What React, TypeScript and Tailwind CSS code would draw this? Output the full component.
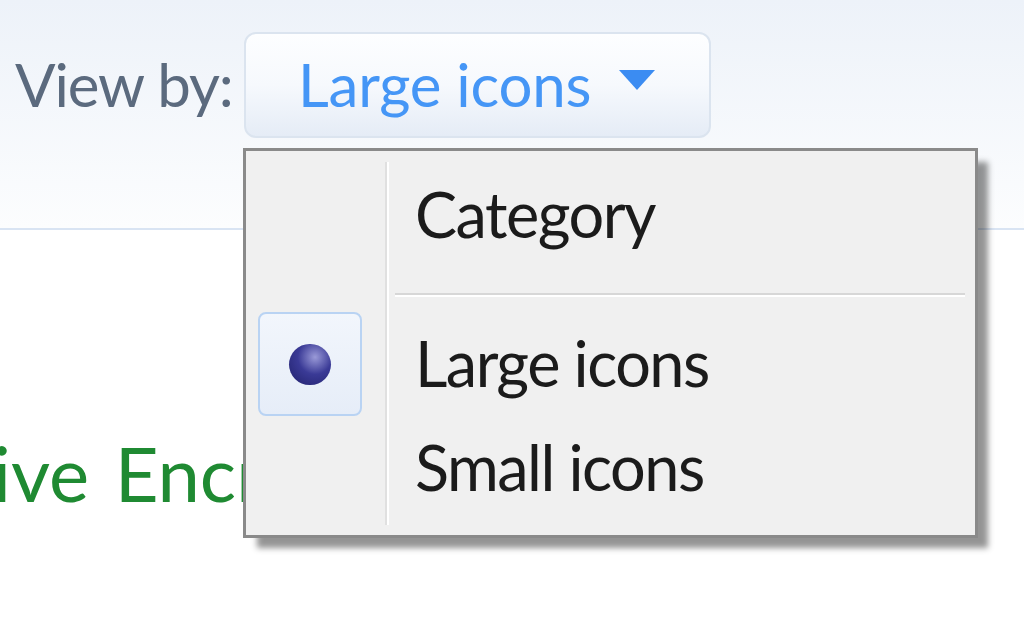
import React from 'react'

const font = { fontFamily: 'Lato, "Noto Sans", sans-serif' }

function RadioBullet() {
  return (
    <div className="w-[104px] h-[104px] rounded-[8px] border-2 border-[#b9d3f3] bg-gradient-to-b from-[#f2f6fc] to-[#e6edf8] flex items-center justify-center">
      <div className="w-[42px] h-[41px] rounded-full bg-[radial-gradient(circle_at_62%_32%,#9a9ad8_0%,#3a3a96_45%,#20206a_100%)]" />
    </div>
  )
}

function MenuRow({ label, checked }: { label: string; checked?: boolean }) {
  return (
    <div className="flex h-[104px] items-center">
      <div className="w-[139px] shrink-0 flex items-center pl-[12px]">{checked && <RadioBullet />}</div>
      <span className="pl-[30px] pb-[4px] text-[63px] leading-none tracking-[-1.5px] text-[#1b1b1b]">{label}</span>
    </div>
  )
}

export default function App() {
  return (
    <div className="w-[1024px] h-[630px] overflow-hidden bg-white" style={font}>
      {/* toolbar strip */}
      <header className="h-[230px] border-b-2 border-[#d9e4f3] bg-gradient-to-b from-[#edf2f9] to-[#fcfdfe] flex items-start pt-[32px] pl-[15px]">
        <div className="w-[229px] h-[106px] flex items-center pb-[2px]">
          <span className="text-[60px] leading-none tracking-[-1.1px] text-[#5b6a7e] whitespace-nowrap">View by:</span>
        </div>

        <div className="relative">
          <button className="w-[467px] h-[106px] rounded-[12px] border-2 border-[#dbe4ef] bg-gradient-to-b from-[#fdfeff] via-[#f6f9fd] to-[#e5ecf6] flex items-center pl-[52px] pb-[2px]">
            <span className="text-[60px] leading-none tracking-[-0.2px] text-[#4596f6] whitespace-nowrap">Large icons</span>
            <svg width="36" height="22" viewBox="0 0 36 22" className="ml-[28px] mb-[6px]">
              <path d="M0 0 H36 L18 20 Z" fill="#3b8cf2" />
            </svg>
          </button>

          {/* dropdown menu */}
          <div className="absolute left-[-1px] top-[116px] z-10 w-[735px] h-[390px] border-[3px] border-[#8a8a8a] bg-[#f0f0f0] shadow-[12px_12px_6px_-2px_rgba(0,0,0,0.42)] pt-[12px]">
            <div className="absolute left-[139px] top-[11px] bottom-[10px] w-[4px] border-l-2 border-r-2 border-l-[#e0e0e0] border-r-white" />
            <MenuRow label="Category" />
            <div className="ml-[149px] mr-[10px] mt-[26px] mb-[15px] h-[4px] border-t-2 border-b-2 border-t-[#d7d7d7] border-b-white" />
            <MenuRow label="Large icons" checked />
            <MenuRow label="Small icons" />
          </div>
        </div>
      </header>

      {/* control panel items */}
      <div className="pt-[205px]">
        <span className="block ml-[-92px] text-[76px] leading-none whitespace-nowrap [word-spacing:6px] text-[#1f8a32]">Drive Encryption</span>
      </div>
    </div>
  )
}
